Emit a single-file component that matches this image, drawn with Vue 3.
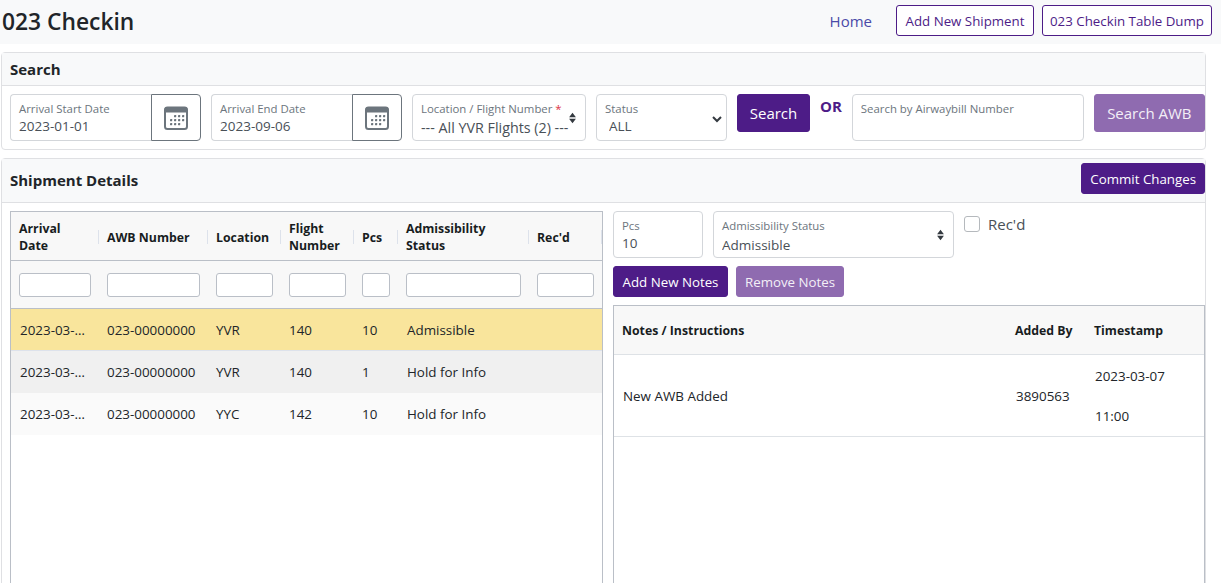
<template>
  <div class="page">
    <header class="topbar">
      <h1>023 Checkin</h1>
      <nav class="topnav">
        <a class="home">Home</a>
        <button class="btn btn-outline add-btn">Add New Shipment</button>
        <button class="btn btn-outline dump-btn">023 Checkin Table Dump</button>
      </nav>
    </header>

    <section class="card search-card">
      <div class="card-head"><h2>Search</h2></div>
      <div class="search-body">
        <div v-for="d in dates" :key="d.label" class="date-group">
          <div class="field date-field">
            <label>{{ d.label }}</label>
            <input :value="d.value" />
          </div>
          <button class="cal-btn">
            <svg width="24" height="24" viewBox="0 0 24 24">
              <rect x="1" y="1.500" width="22" height="21.500" rx="2.500" fill="#fff" stroke="#6c757d" stroke-width="2" />
              <path d="M2.500 1h19A2 2 0 0 1 23.500 3v3.500H.5V3A2 2 0 0 1 2.500 1Z" fill="#6c757d" />
              <g fill="#6c757d">
                <rect v-for="(p, i) in calDots" :key="i" :x="p[0]" :y="p[1]" width="2.200" height="2.200" rx=".4" />
              </g>
            </svg>
          </button>
        </div>
        <div class="field loc-field">
          <label>Location / Flight Number <span class="req">*</span></label>
          <select><option>--- All YVR Flights (2) ---</option></select>
          <svg class="updown" width="9" height="12" viewBox="0 0 10 14"><path d="M5 1l4 5H1zM5 13L1 8h8z" fill="#343a40" /></svg>
        </div>
        <div class="field status-field">
          <label>Status</label>
          <select><option>ALL</option></select>
          <svg class="chev" width="10" height="8" viewBox="0 0 10 8"><path d="M1 2l4 4 4-4" fill="none" stroke="#343a40" stroke-width="2" /></svg>
        </div>
        <button class="btn btn-main btn-lg search-btn">Search</button>
        <strong class="or">OR</strong>
        <div class="field awb-field">
          <input placeholder="Search by Airwaybill Number" />
        </div>
        <button class="btn btn-soft btn-lg awb-btn">Search AWB</button>
      </div>
    </section>

    <section class="card details-card">
      <div class="card-head details-head">
        <h2>Shipment Details</h2>
        <button class="btn btn-main">Commit Changes</button>
      </div>
      <div class="details-body">
        <div class="grid-wrap">
          <div class="grid-head">
            <div class="row-cols head-row">
              <div v-for="c in columns" :key="c" class="hcell"><span>{{ c }}</span></div>
            </div>
            <div class="row-cols filter-row">
              <div v-for="c in columns" :key="c" class="fcell"><input /></div>
            </div>
          </div>
          <div
            v-for="(r, i) in shipments"
            :key="i"
            class="row-cols data-row"
            :class="['tone-' + i]"
          >
            <div class="cell">{{ r.date }}</div>
            <div class="cell">{{ r.awb }}</div>
            <div class="cell">{{ r.loc }}</div>
            <div class="cell">{{ r.flight }}</div>
            <div class="cell">{{ r.pcs }}</div>
            <div class="cell">{{ r.status }}</div>
            <div class="cell"></div>
          </div>
        </div>

        <div class="side">
          <div class="edit-row">
            <div class="field pcs-field">
              <label>Pcs</label>
              <input value="10" />
            </div>
            <div class="field adm-field">
              <label>Admissibility Status</label>
              <select><option>Admissible</option></select>
              <svg class="updown" width="9" height="12" viewBox="0 0 10 14"><path d="M5 1l4 5H1zM5 13L1 8h8z" fill="#343a40" /></svg>
            </div>
            <label class="check"><input type="checkbox" /><span>Rec'd</span></label>
          </div>
          <div class="note-btns">
            <button class="btn btn-main add-note">Add New Notes</button>
            <button class="btn btn-soft">Remove Notes</button>
          </div>
          <div class="notes">
            <div class="notes-cols notes-head">
              <div>Notes / Instructions</div>
              <div>Added By</div>
              <div>Timestamp</div>
            </div>
            <div class="notes-cols notes-row">
              <div>New AWB Added</div>
              <div>3890563</div>
              <div class="stamp">2023-03-07<br />11:00</div>
            </div>
          </div>
        </div>
      </div>
    </section>
  </div>
</template>

<script setup>
const dates = [
  { label: 'Arrival Start Date', value: '2023-01-01' },
  { label: 'Arrival End Date', value: '2023-09-06' }
]

const calDots = [
  [10, 9], [14, 9], [18, 9],
  [6, 13], [10, 13], [14, 13], [18, 13],
  [6, 17], [10, 17], [14, 17]
]

const columns = ['Arrival\nDate', 'AWB Number', 'Location', 'Flight\nNumber', 'Pcs', 'Admissibility\nStatus', "Rec'd"]

const shipments = [
  { date: '2023-03-07 11:00', awb: '023-00000000', loc: 'YVR', flight: '140', pcs: '10', status: 'Admissible' },
  { date: '2023-03-07 11:00', awb: '023-00000000', loc: 'YVR', flight: '140', pcs: '1', status: 'Hold for Info' },
  { date: '2023-03-07 11:00', awb: '023-00000000', loc: 'YYC', flight: '142', pcs: '10', status: 'Hold for Info' }
]
</script>

<style>
html, body {
  margin: 0;
  height: 100%;
  overflow: hidden;
  background: #fff;
}
</style>

<style scoped>
.page {
  font-family: "Open Sans", "Noto Sans", sans-serif;
  color: #212529;
  font-size: 14px;
  height: 583px;
  overflow: hidden;
}

.topbar {
  height: 44px;
  background: #f8f9fa;
  display: flex;
  justify-content: space-between;
  align-items: flex-start;
  padding: 0 9px 0 2px;
  margin-bottom: 8px;
}

h1 {
  margin: 5px 0 0;
  font-size: 22.800px;
  line-height: 33px;
  font-weight: 600;
}

.topnav {
  display: flex;
  align-items: center;
  gap: 8px;
  padding-top: 5px;
}

.home {
  color: #4a4aa8;
  font-size: 15px;
  margin-right: 16px;
}

.btn {
  font-family: inherit;
  font-size: 13.300px;
  height: 31px;
  padding: 0 8px;
  border-radius: 3px;
  border: 1px solid #4d1c87;
  cursor: pointer;
  white-space: nowrap;
}

.btn-outline {
  background: #fff;
  color: #4d1c87;
  padding: 0;
}

.add-btn {
  width: 138px;
}

.dump-btn {
  width: 170px;
}

.btn-main {
  background: #4d1c87;
  color: #fff;
}

.btn-soft {
  background: #8f6bb0;
  border-color: #8f6bb0;
  color: #f3eff7;
}

.btn-lg {
  height: 38px;
  font-size: 15px;
  padding: 0;
}

.search-btn {
  width: 73px;
}

.awb-btn {
  width: 111px;
}

.card {
  margin: 0 15px 8px 1px;
  border: 1px solid #dfe0e3;
  border-radius: 4px;
}

.card-head {
  background: #f8f9fa;
  border-bottom: 1px solid #dfe0e3;
  display: flex;
  align-items: center;
  justify-content: space-between;
  padding: 0 0 1px 8px;
  height: 31px;
}

h2 {
  margin: 0;
  font-size: 15px;
  font-weight: 700;
}

.search-body {
  display: flex;
  align-items: flex-start;
  padding: 8px 0 8px 8px;
  height: 47px;
}

.field {
  position: relative;
  height: 47px;
  box-sizing: border-box;
  border: 1px solid #d3d6da;
  border-radius: 4px;
  background: #fff;
  padding: 6px 8px 0;
}

.field label {
  display: block;
  font-size: 11.400px;
  line-height: 15px;
  color: #6c757d;
  white-space: nowrap;
}

.field input,
.field select {
  display: block;
  width: 100%;
  box-sizing: border-box;
  border: 0;
  outline: 0;
  padding: 0;
  background: transparent;
  font-family: inherit;
  font-size: 13.500px;
  line-height: 18px;
  color: #495057;
  appearance: none;
}

.date-group {
  display: flex;
  margin-right: 10px;
}

.date-field {
  width: 141px;
  border-right: 0;
  border-radius: 4px 0 0 4px;
}

.date-field input {
  margin-top: 1px;
}

.cal-btn {
  width: 50px;
  height: 47px;
  padding: 0;
  border: 1px solid #6c757d;
  border-radius: 0 4px 4px 0;
  background: #fff;
  display: flex;
  align-items: center;
  justify-content: center;
}

.loc-field {
  width: 174px;
  margin-right: 10px;
}

.loc-field select {
  margin-top: 3px;
  font-size: 14.300px;
}

.req {
  color: #dc3545;
}

.updown {
  position: absolute;
  right: 8px;
  top: 17px;
}

.chev {
  position: absolute;
  right: 4px;
  top: 20px;
}

.status-field {
  width: 131px;
  margin-right: 10px;
}

.status-field select {
  margin-top: 1px;
  padding-left: 4px;
}

.or {
  color: #4d1c87;
  font-size: 15px;
  line-height: 18px;
  margin: 3px 10px 0 10px;
}

.awb-field {
  width: 232px;
  margin-right: 10px;
}

.awb-field input {
  font-size: 11.400px;
  line-height: 15px;
}

.awb-field input::placeholder {
  color: #6c757d;
}

.details-head {
  height: 43px;
  padding: 0 0 0 8px;
}

.details-head h2 {
  margin-bottom: 2px;
}

.details-head .btn {
  margin-bottom: 4px;
}

.details-body {
  display: flex;
  gap: 10px;
  padding: 8px 0 0 8px;
}

.grid-wrap {
  width: 591px;
  height: 420px;
  flex: none;
  border: 1px solid #babfc7;
}

.grid-head {
  background: #f8f8f8;
  border-bottom: 1px solid #babfc7;
}

.row-cols {
  display: grid;
  grid-template-columns: 88px 109px 73px 73px 44px 131px 73px;
}

.head-row {
  height: 46px;
  padding-top: 2px;
  border-bottom: 1px solid #babfc7;
  align-items: center;
}

.hcell {
  font-size: 12.300px;
  line-height: 17px;
  font-weight: 700;
  color: #181d1f;
  padding-left: 8px;
  height: 14px;
  display: flex;
  align-items: center;
  border-right: 1px solid #dde2eb;
  white-space: pre-line;
}

.filter-row {
  height: 47px;
}

.fcell {
  padding: 12px 8px 0;
}

.fcell input {
  display: block;
  width: 100%;
  height: 24px;
  box-sizing: border-box;
  border: 1px solid #babfc7;
  border-radius: 3px;
  background: #fff;
}

.data-row {
  height: 42px;
  align-items: center;
  font-size: 13.400px;
}

.cell {
  padding: 0 8px 0 9px;
  white-space: nowrap;
  overflow: hidden;
  text-overflow: ellipsis;
}

.cell:nth-child(n+2):nth-child(-n+5) {
  padding-left: 8px;
}

.tone-0 {
  height: 41px;
  background: #f9e59c;
  border-bottom: 1px solid #dde2eb;
}

.tone-1 {
  background: #f0f0f0;
}

.tone-2 {
  background: #fafafa;
}

.side {
  width: 592px;
  flex: none;
}

.edit-row {
  display: flex;
  align-items: flex-start;
  gap: 10px;
  margin-bottom: 8px;
}

.pcs-field {
  width: 90px;
}

.pcs-field input {
  margin-top: 1px;
}

.adm-field {
  width: 241px;
}

.adm-field select {
  margin-top: 3px;
}

.check {
  display: flex;
  align-items: center;
  gap: 8px;
  margin-top: 3px;
  font-size: 15px;
  color: #495057;
}

.check input {
  width: 16px;
  height: 16px;
  margin: 0;
  appearance: none;
  background: #fff;
  border: 1px solid #b5b9bd;
  border-radius: 3px;
}

.note-btns {
  display: flex;
  gap: 8px;
  margin-bottom: 8px;
}

.add-note {
  width: 115px;
  padding: 0;
}

.notes {
  height: 300px;
  border: 1px solid #babfc7;
  border-bottom: 0;
}

.notes-cols {
  display: grid;
  grid-template-columns: 393px 79px 1fr;
  align-items: center;
  padding-left: 8px;
}

.notes-head {
  height: 48px;
  background: #f8f8f8;
  border-bottom: 1px solid #dee2e6;
  font-size: 12.300px;
  font-weight: 700;
  color: #181d1f;
}

.notes-row {
  height: 81px;
  border-bottom: 1px solid #dee2e6;
  font-size: 13.400px;
  padding-left: 9px;
}

.stamp {
  line-height: 40px;
}
</style>
